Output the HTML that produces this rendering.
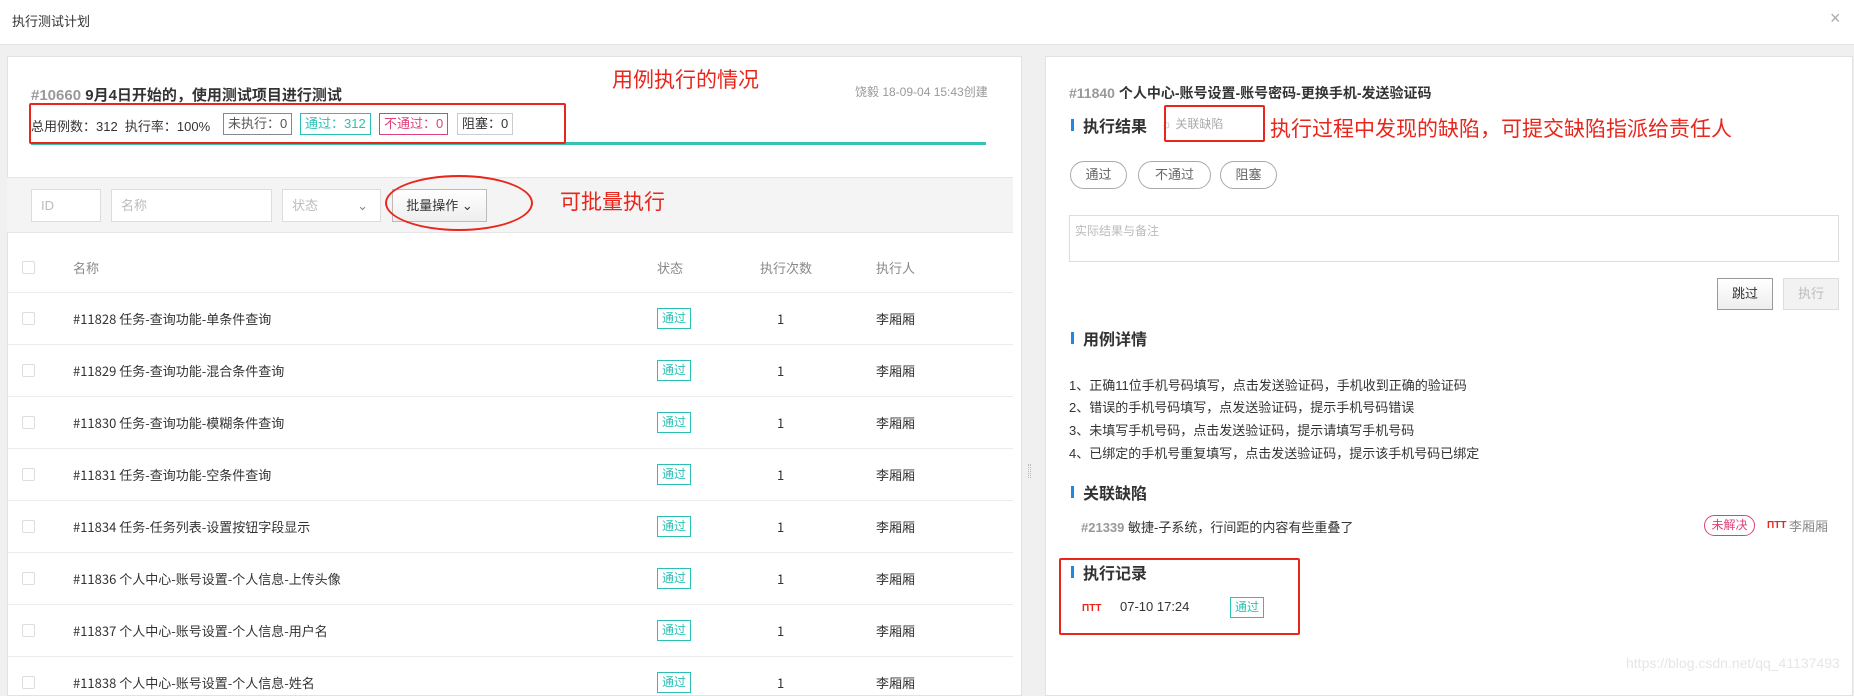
<!DOCTYPE html>
<html><head><meta charset="utf-8"><style>
*{margin:0;padding:0;box-sizing:border-box}
body{width:1854px;height:681px;overflow:hidden;background:#f0f0f0;font-family:"Liberation Sans","Noto Sans CJK SC",sans-serif;color:#333;font-size:14px;position:relative}
.a{position:absolute;white-space:nowrap}
.top{left:0;top:0;width:1854px;height:45px;background:#fff;border-bottom:1px solid #e4e4e4}
.panel{background:#fff;border:1px solid #e2e2e2}
.red{color:#e8261c;font-size:21px}
.rbox{border:2px solid #e8261c;border-radius:2px}
.tag{border:1px solid #999;padding:0 4px;height:22px;line-height:20px;font-size:13px;top:113px}
.inp{background:#fff;border:1px solid #ddd;height:33px;top:189px;color:#bbb;font-size:13px;line-height:31px;padding-left:9px}
.cb{width:13px;height:13px;border:1px solid #ddd;border-radius:2px;left:22px}
.row{left:7px;width:1006px;height:1px;background:#ececec}
.pass{border:1px solid #2bc0b5;color:#2bc0b5;font-size:12px;width:34px;height:21px;line-height:19px;text-align:center}
.h{font-size:16px;color:#333;padding-left:14px;font-weight:bold}
.h:before{content:"";position:absolute;left:2px;top:6px;width:3px;height:12px;background:#1e88e5}
.rb{border:1px solid #aaa;border-radius:15px;height:28px;line-height:26px;text-align:center;color:#666;font-size:13px;top:161px}
.li{left:1069px;font-size:13px;color:#333}
.n{font-size:13px;font-family:"Noto Sans CJK SC",sans-serif;line-height:18px}
</style></head><body>
<div class="a top"></div>
<div class="a" style="left:12px;top:11px;font-size:13px;color:#333">执行测试计划</div>
<div class="a" style="left:1830px;top:8px;font-size:18px;color:#aaa">×</div>

<div class="a panel" style="left:7px;top:56px;width:1015px;height:640px"></div>
<div class="a" style="left:1028px;top:464px;width:3px;height:14px;border-left:1px dotted #bbb;border-right:1px dotted #bbb"></div>
<div class="a panel" style="left:1045px;top:56px;width:808px;height:640px"></div>

<!-- left top -->
<div class="a" style="left:31px;top:84px;font-size:15px;font-weight:bold;color:#333"><span style="color:#999">#10660</span> 9月4日开始的，使用测试项目进行测试</div>
<div class="a" style="left:855px;top:83px;font-size:12px;color:#999">饶毅 18-09-04 15:43创建</div>
<div class="a" style="left:31px;top:116px;font-size:13px">总用例数：312&nbsp; 执行率：100%</div>
<div class="a tag" style="left:223px;color:#555;border-color:#888">未执行：0</div>
<div class="a tag" style="left:300px;color:#2bc0b5;border-color:#2bc0b5">通过：312</div>
<div class="a tag" style="left:379px;color:#e0407a;border-color:#e0407a">不通过：0</div>
<div class="a tag" style="left:457px;color:#333;border-color:#ccc">阻塞：0</div>
<div class="a" style="left:31px;top:142px;width:955px;height:3px;background:#33c3b9"></div>
<div class="a rbox" style="left:29px;top:103px;width:537px;height:41px"></div>
<div class="a red" style="left:612px;top:64px">用例执行的情况</div>

<!-- filter -->
<div class="a" style="left:7px;top:177px;width:1006px;height:56px;background:#f4f4f4;border-top:1px solid #e6e6e6;border-bottom:1px solid #e6e6e6"></div>
<div class="a inp" style="left:31px;width:70px">ID</div>
<div class="a inp" style="left:111px;width:161px">名称</div>
<div class="a inp" style="left:282px;width:99px">状态<span style="position:absolute;right:12px;color:#888">⌄</span></div>
<div class="a" style="left:392px;top:189px;width:95px;height:33px;border:1px solid #bbb;background:linear-gradient(#fff,#eee);font-size:13px;line-height:31px;text-align:center;color:#333">批量操作 ⌄</div>
<div class="a" style="left:385px;top:175px;width:148px;height:56px;border:2px solid #e8261c;border-radius:50%"></div>
<div class="a red" style="left:560px;top:186px">可批量执行</div>

<!-- table -->
<div class="a cb" style="top:261px"></div>
<div class="a n" style="left:73px;top:259px;color:#888">名称</div>
<div class="a n" style="left:657px;top:259px;color:#888">状态</div>
<div class="a n" style="left:760px;top:259px;color:#888">执行次数</div>
<div class="a n" style="left:876px;top:259px;color:#888">执行人</div>

<div class="a row" style="top:292px"></div>
<div class="a cb" style="top:312px"></div><div class="a n" style="left:73px;top:310px">#11828 任务-查询功能-单条件查询</div><div class="a pass" style="left:657px;top:308px">通过</div><div class="a n" style="left:777px;top:310px">1</div><div class="a n" style="left:876px;top:310px">李厢厢</div>
<div class="a row" style="top:344px"></div>
<div class="a cb" style="top:364px"></div><div class="a n" style="left:73px;top:362px">#11829 任务-查询功能-混合条件查询</div><div class="a pass" style="left:657px;top:360px">通过</div><div class="a n" style="left:777px;top:362px">1</div><div class="a n" style="left:876px;top:362px">李厢厢</div>
<div class="a row" style="top:396px"></div>
<div class="a cb" style="top:416px"></div><div class="a n" style="left:73px;top:414px">#11830 任务-查询功能-模糊条件查询</div><div class="a pass" style="left:657px;top:412px">通过</div><div class="a n" style="left:777px;top:414px">1</div><div class="a n" style="left:876px;top:414px">李厢厢</div>
<div class="a row" style="top:448px"></div>
<div class="a cb" style="top:468px"></div><div class="a n" style="left:73px;top:466px">#11831 任务-查询功能-空条件查询</div><div class="a pass" style="left:657px;top:464px">通过</div><div class="a n" style="left:777px;top:466px">1</div><div class="a n" style="left:876px;top:466px">李厢厢</div>
<div class="a row" style="top:500px"></div>
<div class="a cb" style="top:520px"></div><div class="a n" style="left:73px;top:518px">#11834 任务-任务列表-设置按钮字段显示</div><div class="a pass" style="left:657px;top:516px">通过</div><div class="a n" style="left:777px;top:518px">1</div><div class="a n" style="left:876px;top:518px">李厢厢</div>
<div class="a row" style="top:552px"></div>
<div class="a cb" style="top:572px"></div><div class="a n" style="left:73px;top:570px">#11836 个人中心-账号设置-个人信息-上传头像</div><div class="a pass" style="left:657px;top:568px">通过</div><div class="a n" style="left:777px;top:570px">1</div><div class="a n" style="left:876px;top:570px">李厢厢</div>
<div class="a row" style="top:604px"></div>
<div class="a cb" style="top:624px"></div><div class="a n" style="left:73px;top:622px">#11837 个人中心-账号设置-个人信息-用户名</div><div class="a pass" style="left:657px;top:620px">通过</div><div class="a n" style="left:777px;top:622px">1</div><div class="a n" style="left:876px;top:622px">李厢厢</div>
<div class="a row" style="top:656px"></div>
<div class="a cb" style="top:676px"></div><div class="a n" style="left:73px;top:674px">#11838 个人中心-账号设置-个人信息-姓名</div><div class="a pass" style="left:657px;top:672px">通过</div><div class="a n" style="left:777px;top:674px">1</div><div class="a n" style="left:876px;top:674px">李厢厢</div>

<!-- right -->
<div class="a" style="left:1069px;top:83px;font-size:14px;font-weight:bold"><span style="color:#999">#11840</span> 个人中心-账号设置-账号密码-更换手机-发送验证码</div>
<div class="a h" style="left:1069px;top:113px">执行结果</div>
<div class="a" style="left:1161px;top:115px;font-size:12px;color:#aaa">☼ 关联缺陷</div>
<div class="a rbox" style="left:1164px;top:105px;width:101px;height:37px"></div>
<div class="a red" style="left:1270px;top:113px">执行过程中发现的缺陷，可提交缺陷指派给责任人</div>
<div class="a rb" style="left:1070px;width:57px">通过</div>
<div class="a rb" style="left:1138px;width:73px">不通过</div>
<div class="a rb" style="left:1220px;width:57px">阻塞</div>
<div class="a" style="left:1069px;top:215px;width:770px;height:47px;border:1px solid #ddd;font-size:12px;color:#bbb;padding:6px 5px">实际结果与备注</div>
<div class="a" style="left:1717px;top:278px;width:56px;height:32px;border:1px solid #999;background:linear-gradient(#fff,#eee);font-size:13px;line-height:30px;text-align:center">跳过</div>
<div class="a" style="left:1783px;top:278px;width:56px;height:32px;border:1px solid #ddd;background:#f2f2f2;font-size:13px;line-height:30px;text-align:center;color:#bbb">执行</div>
<div class="a h" style="left:1069px;top:326px">用例详情</div>
<div class="a li" style="top:375px">1、正确11位手机号码填写，点击发送验证码，手机收到正确的验证码</div>
<div class="a li" style="top:397px">2、错误的手机号码填写，点发送验证码，提示手机号码错误</div>
<div class="a li" style="top:420px">3、未填写手机号码，点击发送验证码，提示请填写手机号码</div>
<div class="a li" style="top:443px">4、已绑定的手机号重复填写，点击发送验证码，提示该手机号码已绑定</div>
<div class="a h" style="left:1069px;top:480px">关联缺陷</div>
<div class="a" style="left:1081px;top:517px;font-size:13px"><b style="color:#999">#21339</b> 敏捷-子系统，行间距的内容有些重叠了</div>
<div class="a" style="left:1704px;top:515px;width:51px;height:21px;border:1px solid #e0407a;border-radius:11px;color:#e0407a;font-size:12px;line-height:19px;text-align:center">未解决</div>
<div class="a" style="left:1767px;top:520px;font-size:10px;color:#e8261c;font-weight:bold">ΠΤΤ</div>
<div class="a" style="left:1789px;top:516px;font-size:13px;color:#888">李厢厢</div>
<div class="a h" style="left:1069px;top:560px">执行记录</div>
<div class="a" style="left:1082px;top:603px;font-size:10px;color:#e8261c;font-weight:bold">ΠΤΤ</div>
<div class="a" style="left:1120px;top:599px;font-size:13px">07-10 17:24</div>
<div class="a pass" style="left:1230px;top:597px">通过</div>
<div class="a rbox" style="left:1059px;top:558px;width:241px;height:77px"></div>
<div class="a" style="left:1626px;top:655px;font-size:14px;color:#e6e6e6">https://blog.csdn.net/qq_41137493</div>
</body></html>
